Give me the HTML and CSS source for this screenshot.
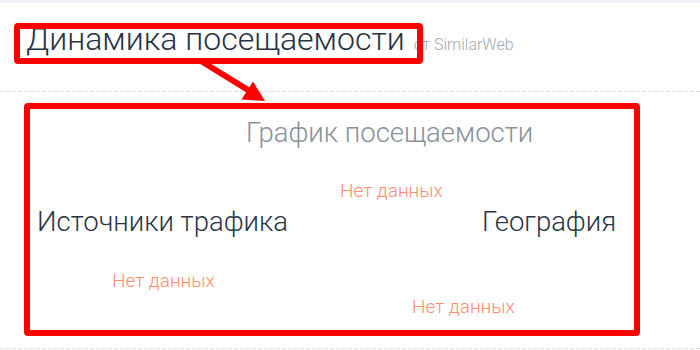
FILE: index.html
```html
<!DOCTYPE html>
<html lang="ru">
<head>
<meta charset="utf-8">
<link rel="stylesheet" href="styles.css">
</head>
<body>
<div class="page">
  <div class="topbar"></div>
  <div class="header">
    <h2 class="title">Динамика посещаемости</h2>
    <span class="source">от SimilarWeb</span>
  </div>
  <div class="dash"></div>
  <div class="content">
    <div class="graph">
      <div class="graph-title">График посещаемости</div>
      <div class="nodata graph-nodata">Нет данных</div>
    </div>
    <div class="cols">
      <div class="col col-left">
        <div class="col-title">Источники трафика</div>
        <div class="nodata left-nodata">Нет данных</div>
      </div>
      <div class="col col-right">
        <div class="col-title geo-title">География</div>
        <div class="nodata right-nodata">Нет данных</div>
      </div>
    </div>
  </div>
  <div class="dash"></div>

  <div class="mark mark-title"></div>
  <div class="mark mark-content"></div>
  <svg class="arrow" width="700" height="350" viewBox="0 0 700 350">
    <line x1="201" y1="61" x2="248" y2="90" stroke="#ff0000" stroke-width="6"/>
    <polygon points="241.5,99.5 253,81.5 265,101" fill="#ff0000"/>
  </svg>
</div>
</body>
</html>
```
FILE: styles.css
```css
html, body {
  margin: 0;
  padding: 0;
  background: #ffffff;
}
body {
  font-family: "Roboto Light", Roboto, "Noto Sans", sans-serif;
  font-weight: 300;
  width: 700px;
  height: 350px;
  overflow: hidden;
}
.page {
  position: relative;
  width: 700px;
  height: 350px;
}
.topbar {
  height: 3px;
  background: #eceff4;
}
.header {
  height: 88px;
  box-sizing: border-box;
  padding: 20px 0 0 26px;
  display: flex;
  align-items: baseline;
}
.title {
  margin: 0;
  font-size: 32px;
  line-height: 32px;
  font-weight: 300;
  color: #263445;
}
.source {
  margin-left: 9px;
  font-size: 16px;
  line-height: 16px;
  color: #a3a9b1;
}
.dash {
  height: 1px;
  background: repeating-linear-gradient(to right, #d3dee3 0 4px, transparent 4px 6px);
}
.content {
  height: 256px;
  box-sizing: border-box;
  padding-top: 27px;
}
.graph-title {
  padding-left: 246px;
  font-size: 27.5px;
  line-height: 28px;
  color: #8a9299;
}
.nodata {
  font-size: 19px;
  line-height: 19px;
  color: #ff8c6e;
}
.graph-nodata {
  margin-top: 34px;
  padding-left: 340px;
}
.cols {
  display: flex;
  margin-top: 8px;
}
.col-title {
  font-size: 27.5px;
  line-height: 27.5px;
  color: #283646;
}
.col-left {
  width: 400px;
  padding-left: 37px;
  box-sizing: border-box;
}
.left-nodata {
  margin-top: 35px;
  padding-left: 75px;
}
.col-right {
  width: 300px;
}
.geo-title {
  padding-left: 82px;
}
.right-nodata {
  margin-top: 61px;
  padding-left: 12px;
}
.mark {
  position: absolute;
  box-sizing: border-box;
  border: 6px solid #ff0000;
  border-radius: 4px;
}
.mark-title {
  left: 14px;
  top: 23px;
  width: 409px;
  height: 41px;
}
.mark-content {
  left: 24px;
  top: 103px;
  width: 616px;
  height: 233px;
}
.arrow {
  position: absolute;
  left: 0;
  top: 0;
}
```
